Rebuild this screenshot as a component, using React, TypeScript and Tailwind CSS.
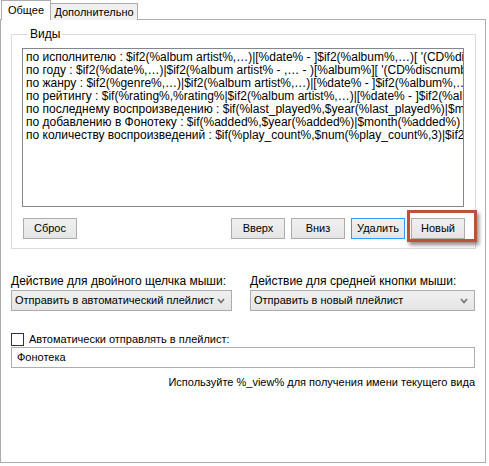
const lines = [
  "по исполнителю : $if2(%album artist%,…)|[%date% - ]$if2(%album%,…)[ '(CD%discnumber%)']|%title%",
  "по году : $if2(%date%,…)|$if2(%album artist% - ,… - )[%album%][ '(CD%discnumber%)']|%title%",
  "по жанру : $if2(%genre%,…)|$if2(%album artist%,…)|[%date% - ]$if2(%album%,…)[ '(CD%discnumber%)']",
  "по рейтингу : $if(%rating%,%rating%|$if2(%album artist%,…)|[%date% - ]$if2(%album%,…)",
  "по последнему воспроизведению : $if(%last_played%,$year(%last_played%)|$month(%last_played%))",
  "по добавлению в Фонотеку : $if(%added%,$year(%added%)|$month(%added%) - $season(%added%))",
  "по количеству воспроизведений : $if(%play_count%,$num(%play_count%,3)|$if2(%album artist%,…))",
];

const Btn = ({ label, primary }: { label: string; primary?: boolean }) => (
  <div
    className={
      "w-[54px] h-[21px] flex items-center justify-center border bg-gradient-to-b from-[#f0f0f0] to-[#e5e5e5] " +
      (primary ? "border-[#3399ff]" : "border-[#acacac]")
    }
  >
    {label}
  </div>
);

const Select = ({ value, width }: { value: string; width: string }) => (
  <div className={`${width} h-[21px] flex items-center justify-between pl-[3px] pr-[6px] border border-[#acacac] bg-gradient-to-b from-[#f0f0f0] to-[#e5e5e5] text-[11px]`}>
    <span className="whitespace-nowrap">{value}</span>
    <svg width="8" height="6" viewBox="0 0 8 6" fill="none" stroke="#707070" strokeWidth="1.6">
      <polyline points="1,1 4,4.5 7,1" />
    </svg>
  </div>
);

const App = () => {
  return (
    <div className="w-[489px] h-[466px] bg-white text-black text-[11px] leading-[13px] whitespace-nowrap [font-family:'Liberation_Sans',Arial,sans-serif]">
      {/* tabs */}
      <div className="flex items-end h-[20px] pl-[1px]">
        <div className="relative z-10 w-[50px] h-[20px] border border-b-0 border-[#acacac] bg-white flex items-center justify-center">
          Общее
        </div>
        <div className="w-[87px] h-[17px] border border-l-0 border-b-0 border-[#acacac] bg-[#f0f0f0] flex items-center justify-center pt-[1px]">
          Дополнительно
        </div>
      </div>

      <div className="-mt-px w-[486px] h-[444px] border border-[#acacac] px-[10px] pt-[8px]">
        <fieldset className="w-[465px] h-[221px] border border-[#dcdcdc] px-[10px] pb-[10px]">
          <legend className="ml-[6px] px-[2px] leading-[13px] text-[12px]">Виды</legend>
          <textarea
            readOnly
            wrap="off"
            defaultValue={lines.join("\n")}
            className="mt-[7px] block w-[442px] h-[159px] resize-none overflow-hidden whitespace-pre border border-[#828790] px-[3px] py-[2px] leading-[13px] text-[12px] outline-none [font-family:'Liberation_Sans',Arial,sans-serif]"
          />
          <div className="mt-[11px] flex justify-between pl-[1px]">
            <Btn label="Сброс" />
            <div className="flex gap-[6px]">
              <Btn label="Вверх" />
              <Btn label="Вниз" />
              <Btn label="Удалить" primary />
              <div className="relative">
                <Btn label="Новый" />
                <div className="absolute left-[-4px] right-[-12px] top-[-8px] bottom-[-3px] border-[3px] border-[#c0503e] shadow-[2px_3px_4px_rgba(0,0,0,0.45)]" />
              </div>
            </div>
          </div>
        </fieldset>

        <div className="mt-[26px] flex gap-[18px]">
          <div className="flex flex-col gap-[2px]">
            <span className="text-[12px]">Действие для двойного щелчка мыши:</span>
            <Select value="Отправить в автоматический плейлист" width="w-[221px]" />
          </div>
          <div className="flex flex-col gap-[2px]">
            <span className="text-[12px]">Действие для средней кнопки мыши:</span>
            <Select value="Отправить в новый плейлист" width="w-[225px]" />
          </div>
        </div>

        <div className="mt-[22px] flex items-center gap-[5px]">
          <div className="w-[13px] h-[13px] border border-[#333333] bg-white" />
          <span>Автоматически отправлять в плейлист:</span>
        </div>
        <div className="mt-[1px] w-[464px] h-[21px] border border-[#abadb3] flex items-center px-[5px]">
          Фонотека
        </div>
        <div className="mt-[8px] w-[464px] text-right">
          Используйте %_view% для получения имени текущего вида
        </div>
      </div>
    </div>
  );
};

export default App;
